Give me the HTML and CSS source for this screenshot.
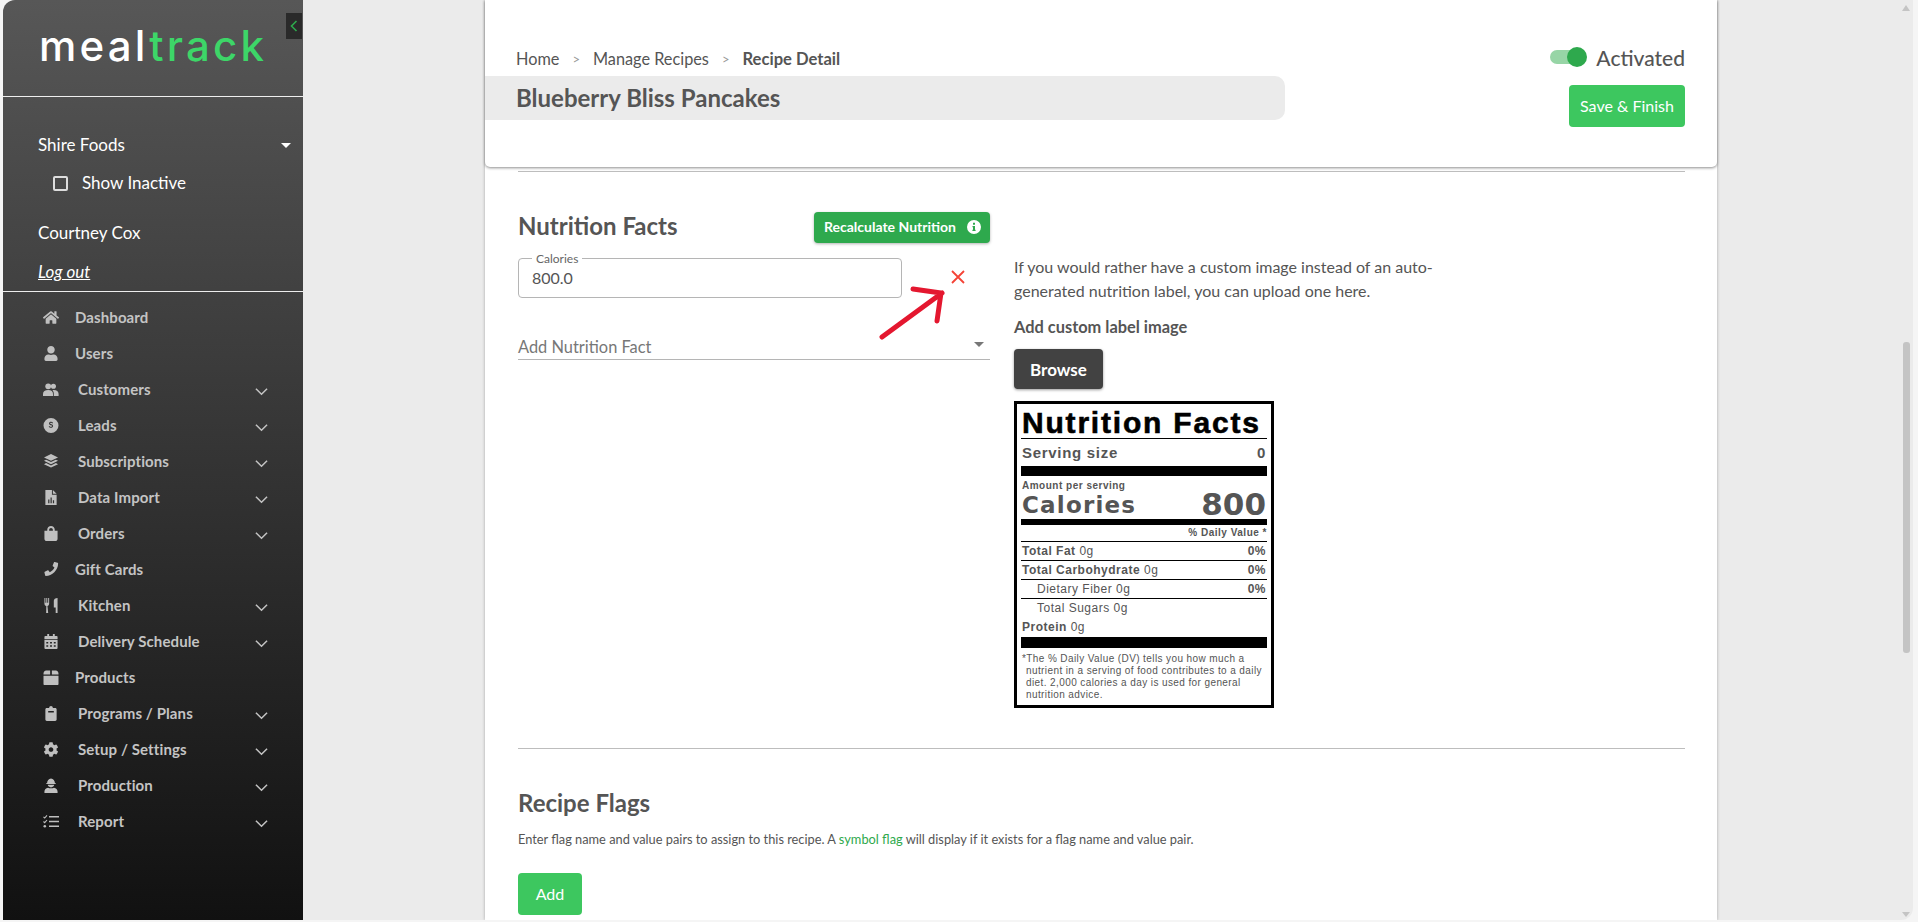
FILE: index.html
```html
<!DOCTYPE html>
<html>
<head>
	<meta charset="UTF-8">
	<title>Recipe Detail</title>
	<link rel="stylesheet" href="styles.css">
</head>
<body>
<div class="app">
	<div class="sidebar">
		<div class="collapse"><svg width="8" height="12" viewBox="0 0 8 12"><path d="M6.5 1L1.5 6l5 5" fill="none" stroke="#2ea94d" stroke-width="1.6"/></svg></div>
		<div class="logo">meal<span>track</span></div>
		<div class="user-block">
			<div class="org"><span>Shire Foods</span><i class="caret"></i></div>
			<div class="inactive"><i class="check"></i><span>Show Inactive</span></div>
			<div class="user-name">Courtney Cox</div>
			<a class="logout">Log out</a>
		</div>
		<ul class="menu">
			<li><svg class="ico" viewBox="0 0 576 512"><path d="M280.37 148.26L96 300.11V464a16 16 0 0 0 16 16l112.06-.29a16 16 0 0 0 15.92-16V368a16 16 0 0 1 16-16h64a16 16 0 0 1 16 16v95.64a16 16 0 0 0 16 16.05L464 480a16 16 0 0 0 16-16V300L295.67 148.26a12.19 12.19 0 0 0-15.3 0zM571.6 251.47L488 182.56V44.05a12 12 0 0 0-12-12h-56a12 12 0 0 0-12 12v72.61L318.47 43a48 48 0 0 0-61 0L4.34 251.47a12 12 0 0 0-1.6 16.9l25.5 31A12 12 0 0 0 45.15 301l235.22-193.74a12.19 12.19 0 0 1 15.3 0L530.9 301a12 12 0 0 0 16.9-1.6l25.5-31a12 12 0 0 0-1.7-16.93z"/></svg><span>Dashboard</span></li>
			<li><svg class="ico" viewBox="0 0 448 512"><path d="M224 256c70.7 0 128-57.3 128-128S294.7 0 224 0 96 57.3 96 128s57.3 128 128 128zm89.6 32h-16.7c-22.2 10.2-46.9 16-72.9 16s-50.6-5.8-72.9-16h-16.7C60.2 288 0 348.2 0 422.4V464c0 26.5 21.5 48 48 48h352c26.5 0 48-21.5 48-48v-41.6c0-74.2-60.2-134.4-134.4-134.4z"/></svg><span>Users</span></li>
			<li class="sub"><svg class="ico" viewBox="0 0 20 16"><circle cx="6.5" cy="4" r="3.6"/><circle cx="13" cy="4" r="3.2"/><path d="M0 16v-2.5C0 10.5 2.5 8.5 6.5 8.5s6 2 6 5V16zM13.5 16v-3c0-1.7-.6-3-1.7-4 .5-.2 1-.3 1.7-.3 3.6 0 6 2 6 5V16z"/></svg><span>Customers</span><svg class="chev" viewBox="0 0 14 9"><path d="M1 1.5l6 6 6-6"/></svg></li>
			<li class="sub"><svg class="ico" viewBox="0 0 16 16"><path fill-rule="evenodd" d="M8 0a8 8 0 1 1 0 16A8 8 0 0 1 8 0zm2.2 5.2C9.8 4.4 9 4 8 4 6.800 4 5.900 4.700 5.900 5.800c0 2.200 3.300 1.500 3.300 2.800 0 .5-.5.800-1.200.800-.7 0-1.300-.3-1.700-.9l-.8.6c.5.900 1.400 1.300 2.500 1.300 1.300 0 2.200-.7 2.200-1.900 0-2.300-3.300-1.500-3.300-2.800 0-.4.400-.7 1.100-.7.600 0 1.100.3 1.400.8z"/></svg><span>Leads</span><svg class="chev" viewBox="0 0 14 9"><path d="M1 1.500l6 6 6-6"/></svg></li>
			<li class="sub"><svg class="ico" viewBox="0 0 16 16"><path d="M8 0l7.500 3.600L8 7.200.5 3.600z"/><path d="M2.800 6.100L8 8.600l5.200-2.500 2.300 1.100L8 10.800.5 7.200z"/><path d="M2.800 9.700L8 12.200l5.200-2.500 2.300 1.100L8 14.400.5 10.800z"/></svg><span>Subscriptions</span><svg class="chev" viewBox="0 0 14 9"><path d="M1 1.500l6 6 6-6"/></svg></li>
			<li class="sub"><svg class="ico" viewBox="0 0 16 16"><path fill-rule="evenodd" d="M2 0h7v5h5v11H2zM10 0l4 4h-4zM5 10v4h1.300v-4zM7.500 8v6h1.300V8zM10 11v3h1.300v-3z"/></svg><span>Data Import</span><svg class="chev" viewBox="0 0 14 9"><path d="M1 1.500l6 6 6-6"/></svg></li>
			<li class="sub"><svg class="ico" viewBox="0 0 448 512"><path d="M352 160v-32C352 57.420 294.579 0 224 0 153.420 0 96 57.420 96 128v32H0v272c0 44.183 35.817 80 80 80h288c44.183 0 80-35.817 80-80V160h-96zm-192-32c0-35.290 28.710-64 64-64s64 28.710 64 64v32H160v-32z"/></svg><span>Orders</span><svg class="chev" viewBox="0 0 14 9"><path d="M1 1.500l6 6 6-6"/></svg></li>
			<li><svg class="ico" viewBox="0 0 16 16"><path d="M15 .8l-3-.7c-.4-.1-.7.1-.9.400L9.800 3.600c-.1.300 0 .6.200.8l1.700 1.400c-1 2.200-2.800 4-5 5L5.300 9.100c-.2-.2-.5-.3-.8-.2L1.400 10.300c-.3.100-.5.500-.4.900l.7 3c.1.300.4.600.7.600C9.200 14.800 15.600 8.500 15.600 1.500c0-.3-.2-.6-.6-.7z"/></svg><span>Gift Cards</span></li>
			<li class="sub"><svg class="ico" viewBox="0 0 16 16"><path d="M1 0h1v5h1V0h1v5h1V0h1v6c0 1.300-.8 2.200-1.800 2.500L5 16H2.800L3 8.500C1.800 8.200 1 7.300 1 6zM11 3c0-1.700 1.600-3 4-3v16h-2v-6h-2z"/></svg><span>Kitchen</span><svg class="chev" viewBox="0 0 14 9"><path d="M1 1.500l6 6 6-6"/></svg></li>
			<li class="sub"><svg class="ico" viewBox="0 0 14 16"><path fill-rule="evenodd" d="M3 0h2v2h4V0h2v2h2c.6 0 1 .4 1 1v2.500H0V3c0-.6.4-1 1-1h2zM0 6.500h14V15c0 .6-.4 1-1 1H1c-.6 0-1-.4-1-1zM2 8.500v1.500h2V8.500zM6 8.500v1.500h2V8.500zM10 8.500v1.500h2V8.500zM2 12v1.500h2V12zM6 12v1.500h2V12zM10 12v1.500h2V12z"/></svg><span>Delivery Schedule</span><svg class="chev" viewBox="0 0 14 9"><path d="M1 1.500l6 6 6-6"/></svg></li>
			<li><svg class="ico" viewBox="0 0 14 14"><path d="M0 3.500C0 2 1 .5 2.500.5h3.700v3.800H0zM7.800.5h3.700C13 .5 14 2 14 3.500v.8H7.800zM0 5.300h14V13c0 .6-.4 1-1 1H1c-.6 0-1-.4-1-1z"/></svg><span>Products</span></li>
			<li class="sub"><svg class="ico" viewBox="0 0 384 512"><path fill-rule="evenodd" d="M336 64h-80c0-35.300-28.700-64-64-64s-64 28.700-64 64H48C21.500 64 0 85.500 0 112v352c0 26.500 21.500 48 48 48h288c26.500 0 48-21.500 48-48V112c0-26.500-21.500-48-48-48zM96 170h192v50H96z"/></svg><span>Programs / Plans</span><svg class="chev" viewBox="0 0 14 9"><path d="M1 1.500l6 6 6-6"/></svg></li>
			<li class="sub"><svg class="ico" viewBox="0 0 512 512"><path d="M487.400 315.700l-42.600-24.600c4.300-23.200 4.300-47 0-70.200l42.600-24.600c4.900-2.800 7.100-8.600 5.500-14-11.100-35.600-30-67.800-54.700-94.600-3.800-4.100-10-5.100-14.800-2.300L380.800 110c-17.900-15.400-38.500-27.300-60.800-35.100V25.800c0-5.600-3.900-10.500-9.400-11.700-36.700-8.200-74.300-7.800-109.200 0-5.500 1.200-9.400 6.100-9.400 11.700V75c-22.200 7.900-42.800 19.800-60.800 35.100L88.700 85.500c-4.900-2.800-11-1.900-14.800 2.300-24.700 26.700-43.600 58.900-54.700 94.600-1.700 5.400.6 11.200 5.500 14L67.300 221c-4.300 23.200-4.300 47 0 70.200l-42.600 24.600c-4.900 2.800-7.100 8.600-5.500 14 11.100 35.600 30 67.800 54.700 94.600 3.800 4.100 10 5.100 14.800 2.300l42.600-24.600c17.900 15.400 38.500 27.300 60.800 35.100v49.200c0 5.600 3.900 10.500 9.400 11.700 36.700 8.200 74.300 7.800 109.200 0 5.500-1.200 9.400-6.100 9.400-11.700v-49.200c22.200-7.900 42.800-19.800 60.800-35.100l42.600 24.600c4.900 2.800 11 1.900 14.800-2.300 24.700-26.700 43.600-58.900 54.700-94.600 1.500-5.500-.7-11.300-5.600-14.100zM256 336c-44.100 0-80-35.900-80-80s35.900-80 80-80 80 35.900 80 80-35.900 80-80 80z"/></svg><span>Setup / Settings</span><svg class="chev" viewBox="0 0 14 9"><path d="M1 1.500l6 6 6-6"/></svg></li>
			<li class="sub"><svg class="ico" viewBox="0 0 14 16"><path d="M2.800 5.500C2.800 2.800 4.600.5 7 .5s4.200 2.300 4.200 5h1v1H1.800v-1z"/><path d="M3.500 7.300h7C10.300 9 8.800 10 7 10S3.700 9 3.500 7.300z"/><path d="M3.800 10.300C4.700 10.800 5.800 11 7 11s2.300-.2 3.200-.7C12.400 10.700 14 12.300 14 14.400V16H0v-1.600c0-2.100 1.600-3.700 3.800-4.100z"/></svg><span>Production</span><svg class="chev" viewBox="0 0 14 9"><path d="M1 1.500l6 6 6-6"/></svg></li>
			<li class="sub"><svg class="ico" viewBox="0 0 16 14"><path d="M6 1.500h10v1.500H6zM6 6.200h10v1.500H6zM6 11h10v1.500H6z"/><path d="M.5 2.300l1.200 1.200L4 .8" fill="none" stroke="#bfbfbf" stroke-width="1.100"/><path d="M.5 7l1.200 1.200L4 5.500" fill="none" stroke="#bfbfbf" stroke-width="1.100"/><circle cx="1.800" cy="11.800" r="1.300"/></svg><span>Report</span><svg class="chev" viewBox="0 0 14 9"><path d="M1 1.500l6 6 6-6"/></svg></li>
		</ul>
	</div>

	<div class="content">
		<div class="panel">
			<div class="panel-head">
				<div class="head-left">
					<div class="crumbs"><span>Home</span><em>&gt;</em><span>Manage Recipes</span><em>&gt;</em><b>Recipe Detail</b></div>
					<div class="title-bar">Blueberry Bliss Pancakes</div>
				</div>
				<div class="head-right">
					<div class="status"><span class="toggle"><i></i></span><span>Activated</span></div>
					<a class="btn btn-save">Save &amp; Finish</a>
				</div>
			</div>
			<div class="panel-body">
				<div class="rule rule-top"></div>
				<div class="facts">
					<div class="facts-left">
						<div class="facts-head">
							<h2>Nutrition Facts</h2>
							<a class="btn-recalc">Recalculate Nutrition<svg width="14" height="14" viewBox="0 0 14 14"><path fill="#fff" fill-rule="evenodd" d="M7 0a7 7 0 1 1 0 14A7 7 0 0 1 7 0zM6 2.800v2h2v-2zM5.500 6v1.200H6v2.600h-.6V11h3.200V9.800H8V6z"/></svg></a>
						</div>
						<div class="cal-row">
							<div class="cal-input"><label>Calories</label>800.0</div>
							<svg class="cal-x" width="14" height="14" viewBox="0 0 14 14"><path d="M1 1l12 12M13 1L1 13" stroke="#f44336" stroke-width="1.800" fill="none"/></svg>
						</div>
						<div class="add-fact"><span>Add Nutrition Fact</span><i></i></div>
						<svg class="arrow" width="70" height="60" viewBox="0 0 70 60"><path d="M7 54L67 10M38 6l28 4-4 28" fill="none" stroke="#e4172f" stroke-width="5" stroke-linecap="round" stroke-linejoin="round"/></svg>
					</div>
					<div class="facts-right">
						<p class="intro">If you would rather have a custom image instead of an auto-generated nutrition label, you can upload one here.</p>
						<p class="add-label">Add custom label image</p>
						<a class="btn-browse">Browse</a>
						<div class="nlabel">
							<div class="n-title">Nutrition Facts</div>
							<div class="n-serving"><span>Serving size</span><span>0</span></div>
							<div class="n-bar n-bar1"></div>
							<div class="n-amount">Amount per serving</div>
							<div class="n-cal"><span>Calories</span><span class="n-num">800</span></div>
							<div class="n-bar n-bar2"></div>
							<div class="n-dv">% Daily Value *</div>
							<div class="n-row line"><span><b>Total Fat</b> 0g</span><b>0%</b></div>
							<div class="n-row line"><span><b>Total Carbohydrate</b> 0g</span><b>0%</b></div>
							<div class="n-row line in"><span>Dietary Fiber 0g</span><b>0%</b></div>
							<div class="n-row in"><span>Total Sugars 0g</span></div>
							<div class="n-row"><span><b>Protein</b> 0g</span></div>
							<div class="n-bar n-bar3"></div>
							<div class="n-foot">*The % Daily Value (DV) tells you how much a<br>nutrient in a serving of food contributes to a daily<br>diet. 2,000 calories a day is used for general<br>nutrition advice.</div>
						</div>
					</div>
				</div>
				<div class="rule rule-mid"></div>
				<h2 class="flags-title">Recipe Flags</h2>
				<p class="flags-text">Enter flag name and value pairs to assign to this recipe. A <a>symbol flag</a> will display if it exists for a flag name and value pair.</p>
				<a class="btn btn-add">Add</a>
			</div>
		</div>
	</div>
	<div class="scroller">
		<i class="up"></i>
		<div class="thumb"></div>
		<i class="down"></i>
	</div>
</div>
</body>
</html>
```

FILE: styles.css
```css
html,body{
	margin: 0;
	padding: 0;
	height: 922px;
	overflow: hidden;
	background: #f5f5f5;
	font-family: "Lato", "Liberation Sans", sans-serif;
	color: #555;
}
p,h2,ul{
	margin: 0;
	padding: 0;
}
.app{
	position: relative;
	display: flex;
	height: 920px;
	margin: 0 5px 0 3px;
	background: #ebebeb;
	border-radius: 12px 0 12px 0;
	overflow: hidden;
}

/* sidebar */
.sidebar{
	position: relative;
	flex: none;
	width: 300px;
	height: 100%;
	background: linear-gradient(#575757, #111);
	color: #fff;
}
.collapse{
	position: absolute;
	top: 13px;
	right: 1px;
	display: flex;
	align-items: center;
	justify-content: center;
	width: 16px;
	height: 26px;
	background: #2a2a2a;
}
.logo{
	height: 96px;
	padding-left: 36px;
	border-bottom: 1px solid #eee;
	font-family: "Inter", sans-serif;
	font-size: 42px;
	font-weight: 500;
	line-height: 92px;
	letter-spacing: 3.2px;
	color: #fff;
}
.logo span{
	color: #3dd668;
}
.user-block{
	height: 194px;
	padding-left: 35px;
	border-bottom: 1px solid #eee;
	font-size: 17px;
}
.org{
	display: flex;
	align-items: center;
	justify-content: space-between;
	padding: 38px 12px 0 0;
	line-height: 20px;
}
.caret{
	width: 0;
	height: 0;
	border-left: 5px solid transparent;
	border-right: 5px solid transparent;
	border-top: 5px solid #fff;
}
.inactive{
	display: flex;
	align-items: center;
	margin-top: 18px;
	padding-left: 15px;
	line-height: 20px;
}
.check{
	width: 11px;
	height: 11px;
	margin-right: 14px;
	border: 2px solid #ddd;
	border-radius: 2px;
}
.user-name{
	margin-top: 30px;
	line-height: 20px;
}
.logout{
	display: block;
	margin-top: 19px;
	line-height: 20px;
	font-style: italic;
	text-decoration: underline;
}
.menu{
	margin-top: 7px;
	list-style: none;
}
.menu li{
	display: flex;
	align-items: center;
	height: 36px;
	padding: 0 35px 0 40px;
	font-size: 15px;
	font-weight: 700;
	letter-spacing: 0.1px;
	color: #c4c4c4;
}
.ico{
	flex: none;
	width: 16px;
	height: 15px;
	margin-right: 16px;
	fill: #bfbfbf;
}
.sub .ico{
	margin-right: 19px;
}
.chev{
	flex: none;
	width: 13px;
	height: 9px;
	margin: 4px 0 0 auto;
	fill: none;
	stroke: #c4c4c4;
	stroke-width: 1.6;
}

/* main */
.content{
	flex: 1;
	padding-left: 182px;
}
.panel{
	width: 1232px;
	height: 100%;
	background: #fff;
	box-shadow: 0 0 3px rgba(0,0,0,0.3);
}
.panel-head{
	display: flex;
	justify-content: space-between;
	height: 167px;
	border-radius: 0 0 5px 5px;
	box-shadow: 0 1px 3px rgba(0,0,0,0.45);
}
.head-left{
	padding-top: 49px;
}
.crumbs{
	display: flex;
	padding-left: 31px;
	font-size: 16.3px;
	line-height: 20px;
}
.crumbs em{
	margin: 0 13px;
	font-style: normal;
	font-size: 13px;
	color: #999;
}
.crumbs b{
	font-size: 16.6px;
	font-weight: 700;
}
.title-bar{
	width: 769px;
	height: 44px;
	margin-top: 7px;
	padding-left: 31px;
	background: #ebebeb;
	border-radius: 0 10px 10px 0;
	font-size: 24px;
	font-weight: 700;
	line-height: 44px;
}
.head-right{
	display: flex;
	flex-direction: column;
	align-items: flex-end;
	padding: 44px 32px 0 0;
}
.status{
	display: flex;
	align-items: center;
	height: 26px;
	font-size: 21px;
	font-weight: 500;
}
.toggle{
	position: relative;
	width: 34px;
	height: 14px;
	margin-right: 12px;
	background: #97d5a6;
	border-radius: 7px;
}
.toggle i{
	position: absolute;
	top: -3px;
	right: -3px;
	width: 20px;
	height: 20px;
	background: #2ea94d;
	border-radius: 50%;
}
.btn{
	display: flex;
	align-items: center;
	justify-content: center;
	padding-bottom: 2px;
	box-sizing: border-box;
	background: #3dc75f;
	color: #fff;
	border-radius: 4px;
	font-size: 16px;
}
.btn-save{
	width: 116px;
	height: 42px;
	margin-top: 15px;
}
.panel-body{
	padding: 0 32px 0 33px;
}
.rule{
	height: 1px;
	background: #bdbdbd;
}
.rule-top{
	margin-top: 4px;
}
.facts{
	display: flex;
}
.facts-left{
	position: relative;
	width: 472px;
	margin-right: 24px;
	padding-top: 40px;
}
.facts-head{
	display: flex;
	align-items: center;
	justify-content: space-between;
	height: 31px;
}
.facts-head h2{
	margin-top: -3px;
}
h2{
	font-size: 24px;
	font-weight: 700;
	line-height: 30px;
}
.btn-recalc{
	display: flex;
	align-items: center;
	justify-content: space-between;
	width: 176px;
	height: 31px;
	padding: 0 9px 2px 10px;
	box-sizing: border-box;
	background: #2ea94d;
	border-radius: 4px;
	box-shadow: 0 1px 3px rgba(0,0,0,0.3);
	color: #fff;
	font-size: 14px;
	font-weight: 700;
}
.cal-row{
	display: flex;
	align-items: center;
	margin-top: 15px;
}
.cal-input{
	position: relative;
	width: 384px;
	height: 40px;
	padding: 7px 0 0 13px;
	box-sizing: border-box;
	border: 1px solid #b5b5b5;
	border-radius: 4px;
	font-size: 16px;
	line-height: 24px;
}
.cal-input label{
	position: absolute;
	top: -7px;
	left: 13px;
	padding: 0 4px;
	background: #fff;
	font-size: 12px;
	line-height: 14px;
	color: #666;
}
.cal-x{
	margin-left: 49px;
	margin-top: -2px;
}
.add-fact{
	display: flex;
	align-items: center;
	justify-content: space-between;
	height: 23px;
	margin-top: 37px;
	padding: 0 6px 1px 0;
	border-bottom: 1px solid #b5b5b5;
	font-size: 16.4px;
	color: #777;
}
.add-fact i{
	width: 0;
	height: 0;
	margin-top: -4px;
	border-left: 5px solid transparent;
	border-right: 5px solid transparent;
	border-top: 5px solid #777;
}
.arrow{
	position: absolute;
	top: 111px;
	left: 357px;
}
.facts-right{
	width: 430px;
	padding-top: 83px;
}
.intro{
	font-size: 16px;
	line-height: 24px;
}
.add-label{
	margin-top: 14px;
	font-size: 16.4px;
	font-weight: 700;
	line-height: 20px;
}
.btn-browse{
	display: flex;
	align-items: center;
	justify-content: center;
	width: 89px;
	height: 40px;
	margin-top: 12px;
	background: #424242;
	border-radius: 4px;
	box-shadow: 0 1px 3px rgba(0,0,0,0.4);
	color: #fff;
	font-size: 17px;
	font-weight: 700;
}

/* nutrition label */
.nlabel{
	width: 260px;
	height: 307px;
	margin-top: 12px;
	padding: 0 4px;
	box-sizing: border-box;
	border: 3px solid #000;
	font-family: "Liberation Sans", Arial, sans-serif;
	letter-spacing: 0.5px;
	font-size: 12px;
}
.n-title{
	height: 34px;
	border-bottom: 1px solid #000;
	padding-left: 1px;
	color: #000;
	font-size: 30px;
	font-weight: 700;
	line-height: 37px;
	letter-spacing: 1.8px;
	-webkit-text-stroke: 0.6px #000;
	white-space: nowrap;
}
.n-serving{
	display: flex;
	justify-content: space-between;
	height: 27px;
	padding: 0 1px;
	font-size: 15px;
	font-weight: 700;
	line-height: 27px;
	letter-spacing: 0.7px;
}
.n-bar{
	background: #000;
}
.n-bar1{
	height: 10px;
}
.n-bar2{
	height: 6px;
}
.n-bar3{
	height: 11px;
}
.n-amount{
	height: 20px;
	padding-left: 1px;
	font-size: 10px;
	font-weight: 700;
	line-height: 20px;
}
.n-cal{
	display: flex;
	justify-content: space-between;
	height: 23px;
	padding: 0 1px;
	font-family: "DejaVu Sans", sans-serif;
	font-size: 23px;
	font-weight: 700;
	line-height: 20px;
	letter-spacing: 1.2px;
}
.n-cal span{
	margin-top: -1px;
}
.n-cal .n-num{
	margin-top: -8px;
	font-size: 31px;
	line-height: 32px;
	letter-spacing: 0;
}
.n-dv{
	height: 16px;
	border-bottom: 1px solid #000;
	font-size: 10px;
	font-weight: 700;
	line-height: 16px;
	text-align: right;
}
.n-row{
	display: flex;
	justify-content: space-between;
	height: 19px;
	padding: 0 1px;
	box-sizing: border-box;
	line-height: 18px;
}
.n-row.line{
	border-bottom: 1px solid #000;
}
.n-row.in{
	padding-left: 16px;
}
.n-foot{
	margin-top: 5px;
	padding-left: 5px;
	text-indent: -4px;
	font-size: 10px;
	line-height: 12px;
	letter-spacing: 0.4px;
	white-space: nowrap;
}

/* flags */
.rule-mid{
	margin-top: 40px;
}
.flags-title{
	margin-top: 39px;
}
.flags-text{
	margin-top: 12px;
	font-size: 12.8px;
	line-height: 18px;
}
.flags-text a{
	color: #2ea94d;
}
.btn-add{
	width: 64px;
	height: 42px;
	margin-top: 25px;
}

/* scrollbar painted over the page edge */
.scroller{
	position: absolute;
	top: 0;
	right: 0;
	bottom: 0;
	width: 16px;
}
.thumb{
	position: absolute;
	top: 342px;
	left: 6px;
	width: 7px;
	height: 311px;
	background: #c4c4c4;
	border-radius: 3px;
}
.up,.down{
	position: absolute;
	left: 5px;
	width: 0;
	height: 0;
	border-left: 4px solid transparent;
	border-right: 4px solid transparent;
}
.up{
	top: 5px;
	border-bottom: 6px solid #c4c4c4;
}
.down{
	bottom: 3px;
	border-top: 5px solid #c4c4c4;
}
```
